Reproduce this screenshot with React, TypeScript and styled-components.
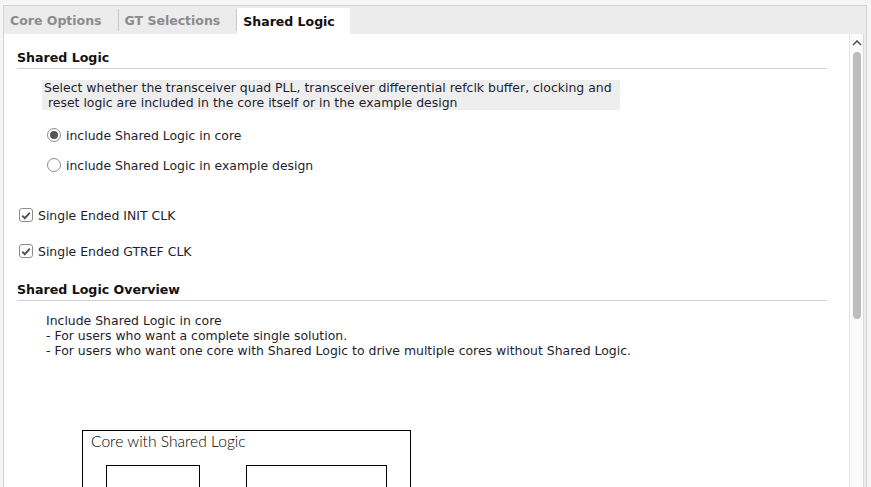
import React from 'react';
import styled, { createGlobalStyle } from 'styled-components';

const GlobalStyle = createGlobalStyle`
  html, body {
    margin: 0;
    padding: 0;
    height: 100%;
    overflow: hidden;
    background-color: #f5f5f5;
    font-family: 'DejaVu Sans', 'Liberation Sans', sans-serif;
  }
  #root {
    height: 100%;
  }
`;

const Frame = styled.div`
  margin: 5px 4px 0 3px;
  height: calc(100% - 5px);
  border: 1px solid #d2d2d2;
  border-bottom: none;
  box-sizing: border-box;
  background-color: #ececec;
  display: flex;
  flex-direction: column;
`;

const TabBar = styled.div`
  height: 28px;
  display: flex;
  align-items: stretch;
  flex-shrink: 0;
`;

const Tab = styled.div<{ active?: boolean }>`
  display: flex;
  align-items: center;
  padding: 0 ${(props) => (props.active ? '15px' : '16px')} 0 6px;
  margin-top: ${(props) => (props.active ? '2px' : '0')};
  background-color: ${(props) => (props.active ? '#ffffff' : 'transparent')};
  color: ${(props) => (props.active ? '#111111' : '#8b8b8b')};
  font-size: 12.5px;
  font-weight: bold;
  white-space: nowrap;
`;

const TabSeparator = styled.div`
  width: 1px;
  height: 22px;
  align-self: center;
  background-color: #c8c8c8;
`;

const Body = styled.div`
  flex: 1;
  display: flex;
  margin-right: 2px;
  background-color: #ffffff;
  overflow: hidden;
`;

const Content = styled.div`
  flex: 1;
  padding: 14px 22px 0 13px;
  overflow: hidden;
  color: #1e1e2e;
  font-size: 12.44px;
`;

const SectionTitle = styled.div<{ top?: number }>`
  margin-top: ${(props) => props.top || 0}px;
  height: 20px;
  line-height: 20px;
  border-bottom: 1px solid #d0d0d0;
  font-size: 12.6px;
  font-weight: bold;
  color: #111111;
`;

const Description = styled.div`
  margin: 11px 0 0 25px;
  width: 578px;
  padding-left: 2px;
  box-sizing: border-box;
  background-color: #eeeeee;
  line-height: 15px;
  white-space: pre;
`;

const OptionRow = styled.label<{ indent: number; top: number }>`
  display: flex;
  align-items: center;
  gap: 5px;
  height: 22px;
  margin: ${(props) => props.top}px 0 0 ${(props) => props.indent}px;
  white-space: nowrap;
`;

const RadioCircle = styled.span<{ checked?: boolean }>`
  width: 14px;
  height: 14px;
  box-sizing: border-box;
  border: 1px solid #8c8c8c;
  border-radius: 50%;
  background-color: #ffffff;
  display: flex;
  align-items: center;
  justify-content: center;
  &::after {
    content: '';
    display: ${(props) => (props.checked ? 'block' : 'none')};
    width: 8px;
    height: 8px;
    border-radius: 50%;
    background-color: #555555;
  }
`;

const CheckBox = styled.span`
  width: 14px;
  height: 14px;
  box-sizing: border-box;
  border: 1px solid #8c8c8c;
  border-radius: 3px;
  background-color: #ffffff;
  display: flex;
  align-items: center;
  justify-content: center;
`;

const Overview = styled.div`
  margin: 12px 0 0 29px;
  line-height: 15px;
  white-space: pre;
`;

const Diagram = styled.svg`
  display: block;
  margin: 72px 0 0 65px;
`;

const ScrollBar = styled.div`
  width: 13px;
  border-left: 1px solid #e4e4e4;
  border-right: 1px solid #dadada;
  background-color: #fafafa;
  display: flex;
  flex-direction: column;
  align-items: center;
  flex-shrink: 0;
`;

const ScrollArrow = styled.svg`
  margin-top: 6px;
`;

const ScrollThumb = styled.div`
  margin-top: 6px;
  width: 8px;
  height: 267px;
  border-radius: 4px;
  background-color: #bdbdbd;
`;

function Radio({ checked, label, top }: { checked?: boolean; label: string; top: number }) {
  return (
    <OptionRow indent={30} top={top}>
      <RadioCircle checked={checked} />
      {label}
    </OptionRow>
  );
}

function Check({ label, top }: { label: string; top: number }) {
  return (
    <OptionRow indent={2} top={top}>
      <CheckBox>
        <svg width="10" height="9" viewBox="0 0 10 9">
          <path d="M1.2 4.6 L3.8 7.2 L8.8 1.6" fill="none" stroke="#555555" strokeWidth="2" />
        </svg>
      </CheckBox>
      {label}
    </OptionRow>
  );
}

export default function App(): JSX.Element {
  return (
    <>
      <GlobalStyle />
      <Frame>
        <TabBar>
          <Tab>Core Options</Tab>
          <TabSeparator />
          <Tab>GT Selections</Tab>
          <TabSeparator />
          <Tab active>Shared Logic</Tab>
        </TabBar>
        <Body>
          <Content>
            <SectionTitle>Shared Logic</SectionTitle>
            <Description>
              {'Select whether the transceiver quad PLL, transceiver differential refclk buffer, clocking and\n reset logic are included in the core itself or in the example design'}
            </Description>
            <Radio checked label="include Shared Logic in core" top={14} />
            <Radio label="include Shared Logic in example design" top={8} />
            <Check label="Single Ended INIT CLK" top={28} />
            <Check label="Single Ended GTREF CLK" top={14} />
            <SectionTitle top={18}>Shared Logic Overview</SectionTitle>
            <Overview>
              {'Include Shared Logic in core\n- For users who want a complete single solution.\n- For users who want one core with Shared Logic to drive multiple cores without Shared Logic.'}
            </Overview>
            <Diagram width="340" height="80" viewBox="0 0 340 80">
              <rect x="0.5" y="0.5" width="328" height="90" fill="#ffffff" stroke="#000000" />
              <text x="9" y="17" fontFamily="Lato, 'Open Sans', sans-serif" fontWeight="300" fontSize="15.6" fill="#000000">
                Core with Shared Logic
              </text>
              <rect x="24.5" y="35.5" width="93" height="60" fill="none" stroke="#000000" />
              <rect x="164.5" y="35.5" width="140" height="60" fill="none" stroke="#000000" />
            </Diagram>
          </Content>
          <ScrollBar>
            <ScrollArrow width="10" height="6" viewBox="0 0 10 6">
              <path d="M1 5 L5 1 L9 5" fill="none" stroke="#555555" strokeWidth="1.6" />
            </ScrollArrow>
            <ScrollThumb />
          </ScrollBar>
        </Body>
      </Frame>
    </>
  );
}
